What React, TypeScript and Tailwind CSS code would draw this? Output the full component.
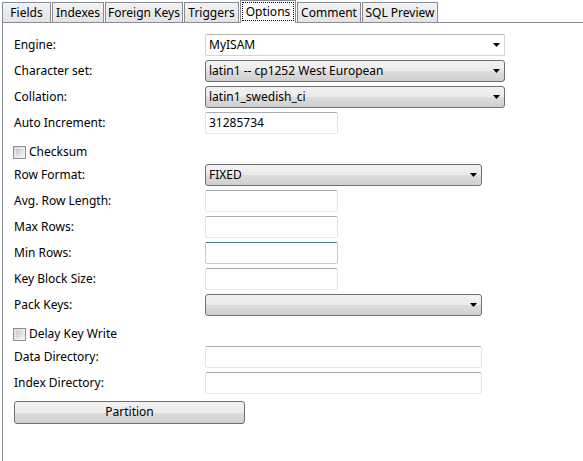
import React from 'react'

const FONT = 'font-["Noto_Sans",sans-serif]'

const TABS = [
  { label: 'Fields', w: 'w-[49px]' },
  { label: 'Indexes', w: 'w-[52px]' },
  { label: 'Foreign Keys', w: 'w-[78px]' },
  { label: 'Triggers', w: 'w-[55px]' },
  { label: 'Options', w: 'w-[56px]', active: true },
  { label: 'Comment', w: 'w-[64px]' },
  { label: 'SQL Preview', w: 'w-[76px]' },
]

function Arrow() {
  return (
    <svg width="7" height="4" viewBox="0 0 7 4" className="shrink-0">
      <path d="M0 0h7L3.5 4z" fill="#000" />
    </svg>
  )
}

function Combo({ value = '', w, editable }: { value?: string; w: string; editable?: boolean }) {
  const skin = editable
    ? 'bg-white border border-[#d5d5d5] border-t-[#b5b5b5] rounded-[2px]'
    : 'border border-[#707070] rounded-[3px] bg-[linear-gradient(#f2f2f2_0%,#ebebeb_50%,#dddddd_50%,#cfcfcf_100%)]'
  return (
    <div className={`${w} h-[22px] ${skin} flex items-center justify-between pl-[3px] pr-[4px]`}>
      <span className="text-[12px] leading-none text-black">{value}</span>
      <Arrow />
    </div>
  )
}

function Field({ value = '', w = 'w-[133px]', hot }: { value?: string; w?: string; hot?: boolean }) {
  const skin = hot
    ? 'border-[#b5cfe7] border-t-[#3d7bad]'
    : 'border-[#e2e3ea] border-t-[#abadb3] border-b-[#e3e9ef]'
  return (
    <div className={`${w} h-[22px] border ${skin} rounded-[2px] bg-white flex items-center pl-[3px]`}>
      <span className="text-[12px] leading-none text-black">{value}</span>
    </div>
  )
}

function Row({ label, children }: { label: string; children: React.ReactNode }) {
  return (
    <div className="flex items-center h-[22px] mb-[4px]">
      <div className="w-[191px] text-[12px] text-black">{label}</div>
      {children}
    </div>
  )
}

function Check({ label }: { label: string }) {
  return (
    <div className="flex items-end h-[22px] mb-[4px] pb-[1px] -ml-px">
      <div className="w-[13px] h-[13px] border border-[#8e8f8f] bg-[linear-gradient(135deg,#dcdcdc,#f6f6f6)] p-[2px] mr-[3px]">
        <div className="w-full h-full bg-[linear-gradient(135deg,#cbcbcb,#eeeeee)]" />
      </div>
      <span className="text-[12px] leading-[14px] text-black">{label}</span>
    </div>
  )
}

export default function App() {
  return (
    <div className={`w-[583px] h-[461px] bg-white flex flex-col overflow-hidden ${FONT}`}>
      <div className="flex items-end h-[22px] pl-[2px] relative z-10">
        {TABS.map((t) =>
          t.active ? (
            <div key={t.label} className={`${t.w} h-[23px] -mb-px mr-px bg-white border border-b-0 border-[#898c95] flex p-[1px] pb-[2px]`}>
              <div className="flex-1 border border-dotted border-black flex items-center justify-center text-[12px] text-black">
                {t.label}
              </div>
            </div>
          ) : (
            <div
              key={t.label}
              className={`${t.w} h-[20px] border border-b-0 border-[#898c95] bg-[linear-gradient(#f2f2f2,#e3e3e3)] flex items-center justify-center text-[12px] text-black mr-px`}
            >
              {t.label}
            </div>
          ),
        )}
      </div>

      <div className="flex-1 ml-[2px] border-l border-t border-[#898c95] pt-[11px] pl-[11px]">
        <Row label="Engine:"><Combo value="MyISAM" w="w-[300px]" editable /></Row>
        <Row label="Character set:"><Combo value="latin1 -- cp1252 West European" w="w-[300px]" /></Row>
        <Row label="Collation:"><Combo value="latin1_swedish_ci" w="w-[300px]" /></Row>
        <Row label="Auto Increment:"><Field value="31285734" /></Row>
        <Check label="Checksum" />
        <Row label="Row Format:"><Combo value="FIXED" w="w-[277px]" /></Row>
        <Row label="Avg. Row Length:"><Field /></Row>
        <Row label="Max Rows:"><Field /></Row>
        <Row label="Min Rows:"><Field hot /></Row>
        <Row label="Key Block Size:"><Field /></Row>
        <Row label="Pack Keys:"><Combo w="w-[277px]" /></Row>
        <Check label="Delay Key Write" />
        <Row label="Data Directory:"><Field w="w-[277px]" /></Row>
        <Row label="Index Directory:"><Field w="w-[277px]" /></Row>
        <button className="w-[231px] h-[23px] border border-[#707070] rounded-[3px] bg-[linear-gradient(#f2f2f2_0%,#ebebeb_50%,#dddddd_50%,#cfcfcf_100%)] text-[12px] text-black">
          Partition
        </button>
      </div>
    </div>
  )
}
